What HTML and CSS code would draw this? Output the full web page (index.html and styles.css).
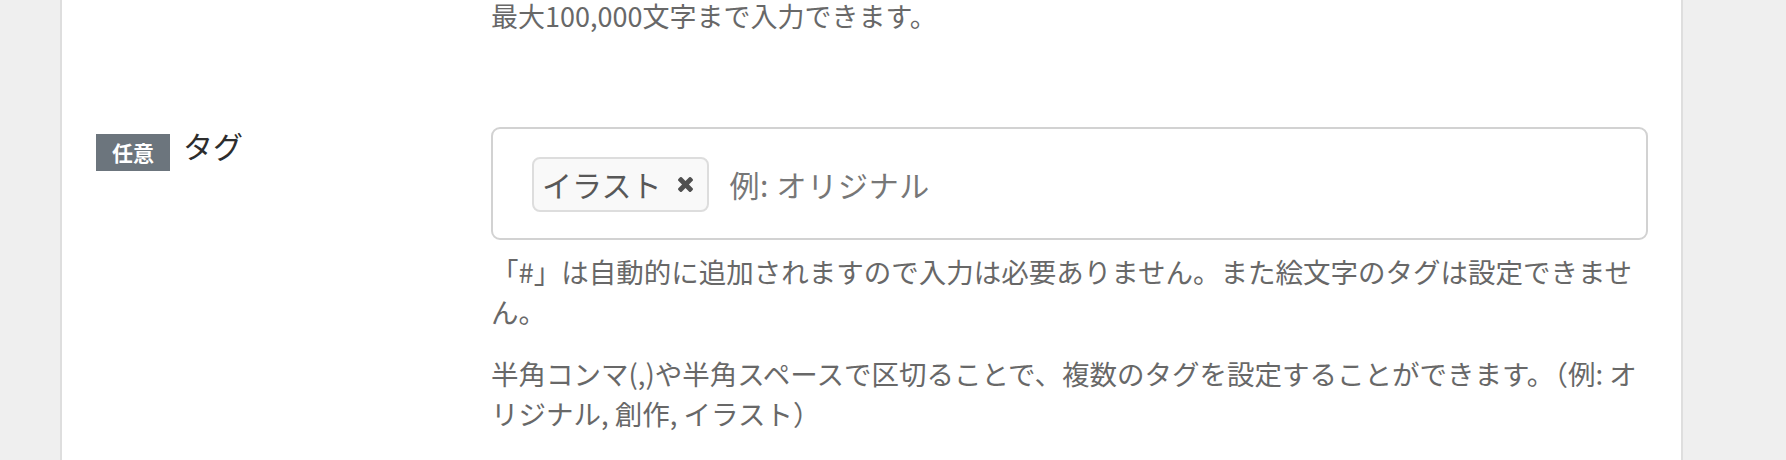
FILE: index.html
```html
<!DOCTYPE html>
<html lang="ja">
<head>
<meta charset="utf-8">
<title>タグ</title>
<link rel="stylesheet" href="styles.css">
</head>
<body>
<div class="page">
  <div class="form">
    <div class="row row--prev">
      <div class="row-label"></div>
      <div class="row-field">
        <p class="help help--note">最大100,000文字まで入力できます。</p>
      </div>
    </div>
    <div class="row row--tags">
      <div class="row-label">
        <span class="badge">任意</span>
        <span class="label-text">タグ</span>
      </div>
      <div class="row-field">
        <div class="tag-input">
          <span class="chip">
            <span class="chip-text">イラスト</span>
            <svg class="chip-remove" viewBox="110 366 1188 1188" width="15" height="15" aria-hidden="true">
              <path d="M1298 1322q0 40-28 68l-136 136q-28 28-68 28t-68-28l-294-294-294 294q-28 28-68 28t-68-28l-136-136q-28-28-28-68t28-68l294-294-294-294q-28-28-28-68t28-68l136-136q28-28 68-28t68 28l294 294 294-294q28-28 68-28t68 28l136 136q28 28 28 68t-28 68l-294 294 294 294q28 28 28 68z"/>
            </svg>
          </span>
          <span class="placeholder">例: オリジナル</span>
        </div>
        <p class="help help--after-input">「#」は自動的に追加されますので入力は必要ありません。また絵文字のタグは設定できません。</p>
        <p class="help">半角コンマ(,)や半角スペースで区切ることで、複数のタグを設定することができます。（例: オリジナル, 創作, イラスト）</p>
      </div>
    </div>
  </div>
</div>
</body>
</html>
```

FILE: styles.css
```css
html, body {
  margin: 0;
  height: 100%;
}

body {
  background: #efefef;
  font-family: "Noto Sans CJK JP", "Noto Sans", sans-serif;
  overflow: hidden;
}

.page {
  box-sizing: border-box;
  display: flow-root;
  margin-left: 60px;
  width: 1623px;
  min-height: 100%;
  background: #ffffff;
  border-left: 2px solid #dedede;
  border-right: 2px solid #dedede;
  padding: 0 33px 0 34px;
}

.row {
  display: grid;
  grid-template-columns: 395px 1157px;
}

.row--prev {
  margin-top: -4px;
}

.row--tags {
  margin-top: 90px;
}

.row-label {
  display: flex;
  align-items: flex-start;
  gap: 13px;
}

.badge {
  margin-top: 7px;
  height: 37px;
  line-height: 37px;
  padding: 0 16px;
  background: #6c757d;
  color: #ffffff;
  font-size: 21px;
  font-weight: 700;
}

.label-text {
  margin-top: 3px;
  font-size: 30px;
  line-height: 30px;
  color: #2d2d2d;
}

.help {
  margin: 0;
  font-size: 27.5px;
  line-height: 40.5px;
  color: #686868;
}

.help--note {
  font-size: 27px;
}

.help + .help {
  margin-top: 21px;
}

.help--after-input {
  margin-top: 11px;
}

.tag-input {
  box-sizing: border-box;
  display: flex;
  align-items: center;
  gap: 20px;
  height: 113px;
  padding: 28px 39px 26px;
  border: 2px solid #d2d2d2;
  border-radius: 9px;
  background: #ffffff;
}

.chip {
  display: flex;
  align-items: center;
  gap: 17px;
  height: 55px;
  box-sizing: border-box;
  padding: 0 14px 0 8px;
  border: 2px solid #dddddd;
  border-radius: 8px;
  background: #f9f9f9;
  font-size: 30px;
  color: #585858;
}

.chip-remove {
  display: block;
  fill: #505050;
}

.placeholder {
  font-size: 30px;
  letter-spacing: 0.7px;
  color: #777777;
}
```
